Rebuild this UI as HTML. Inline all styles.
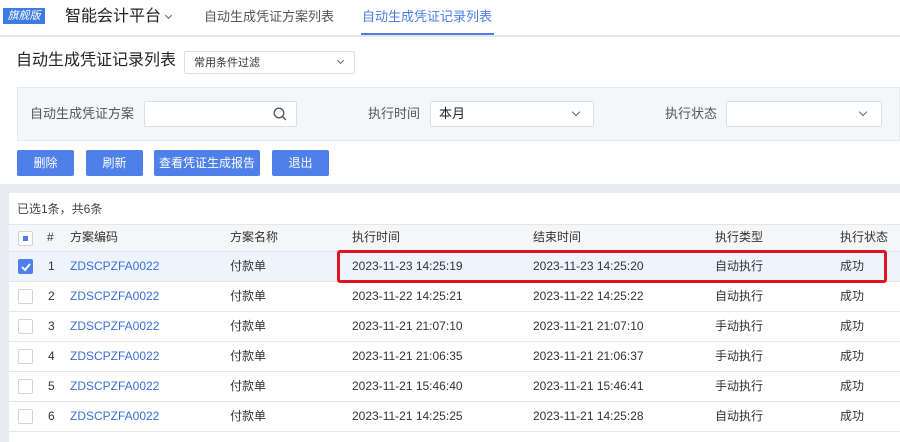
<!DOCTYPE html>
<html><head><meta charset="utf-8"><style>
*{margin:0;padding:0;box-sizing:border-box}
body{width:900px;height:442px;overflow:hidden;background:#e9edf2;font-family:"Liberation Sans","Noto Sans CJK SC",sans-serif;font-size:12px;color:#333;position:relative}
.a{position:absolute;white-space:nowrap}
.nav{position:absolute;left:0;top:0;width:900px;height:37px;background:#fff;border-bottom:2px solid #e4e6ea}
.top{position:absolute;left:0;top:37px;width:900px;height:147px;background:#fff}
.btn{position:absolute;top:150px;height:26px;background:#4f7fe9;color:#fff;font-size:12px;text-align:center;line-height:26px;border-radius:2px}
.sel{position:absolute;background:#fff;border:1px solid #dcdfe6;border-radius:2px}
.chev{position:absolute;width:7px;height:7px;border-right:1.3px solid #666;border-bottom:1.3px solid #666;transform:rotate(45deg)}
.tbl{position:absolute;left:9px;top:193px;width:891px;height:249px;background:#fff}
.row{position:absolute;left:9px;width:891px;height:30px;border-bottom:1px solid #e6e6e6;background:#fff}
.cb{position:absolute;left:9px;top:7px;width:15px;height:15px;border:1px solid #d0d3d8;border-radius:2px;background:#fff}
.row span{position:absolute;top:0;line-height:29px}
.link{color:#3a6fd8}
</style></head><body>
<div class="nav">
 <div class="a" style="left:3px;top:8px;width:42px;height:16px;background:#3c7be0;color:#fff;font-size:11px;font-style:italic;text-align:center;line-height:16px">旗舰版</div>
 <div class="a" style="left:65px;top:6px;font-size:16px;color:#222;line-height:22px">智能会计平台</div>
 <div class="chev" style="left:166px;top:13px;width:5px;height:5px"></div>
 <div class="a" style="left:204px;top:7px;font-size:13px;color:#555;line-height:20px">自动生成凭证方案列表</div>
 <div class="a" style="left:362px;top:7px;font-size:13px;color:#4a7ee6;line-height:20px">自动生成凭证记录列表</div>
 <div class="a" style="left:361px;top:33px;width:133px;height:2px;background:#4a7ee6"></div>
</div>
<div class="top"></div>
<div class="a" style="left:16px;top:50px;font-size:16px;color:#222;line-height:22px">自动生成凭证记录列表</div>
<div class="sel" style="left:184px;top:51px;width:171px;height:23px"><span class="a" style="left:9px;top:0;line-height:22px;font-size:11px">常用条件过滤</span><div class="chev" style="left:153px;top:6px;width:5px;height:5px"></div></div>
<div class="a" style="left:17px;top:87px;width:883px;height:54px;background:#f5f6f7;border:1px solid #e6e7ea"></div>
<div class="a" style="left:30px;top:101px;font-size:13px;color:#555;line-height:26px">自动生成凭证方案</div>
<div class="sel" style="left:144px;top:101px;width:153px;height:26px">
 <svg class="a" style="left:128px;top:5px" width="14" height="14" viewBox="0 0 14 14"><circle cx="6" cy="6" r="4.8" fill="none" stroke="#555" stroke-width="1.3"/><path d="M9.5 9.5L13 13" stroke="#555" stroke-width="1.3"/></svg></div>
<div class="a" style="left:368px;top:101px;font-size:13px;color:#555;line-height:26px">执行时间</div>
<div class="sel" style="left:430px;top:101px;width:164px;height:26px"><span class="a" style="left:8px;top:0;line-height:24px;font-size:13px;color:#222">本月</span><div class="chev" style="left:142px;top:7px;width:6px;height:6px"></div></div>
<div class="a" style="left:665px;top:101px;font-size:13px;color:#555;line-height:26px">执行状态</div>
<div class="sel" style="left:726px;top:101px;width:156px;height:26px"><div class="chev" style="left:133px;top:7px;width:6px;height:6px"></div></div>
<div class="btn" style="left:17px;width:57px">删除</div>
<div class="btn" style="left:86px;width:57px">刷新</div>
<div class="btn" style="left:154px;width:106px">查看凭证生成报告</div>
<div class="btn" style="left:272px;width:57px">退出</div>
<div class="tbl"></div>
<div class="a" style="left:17px;top:200px;color:#444;line-height:18px">已选1条，共6条</div>
<div class="row" style="top:224px;height:28px;background:#f5f6f7;border-top:1px solid #e6e6e6">
 <div class="cb" style="top:6px"><div class="a" style="left:4px;top:4px;width:5px;height:5px;background:#4a7ee6"></div></div>
 <span style="left:38px;line-height:24px">#</span><span style="left:61px;line-height:24px">方案编码</span><span style="left:221px;line-height:24px">方案名称</span><span style="left:343px;line-height:24px">执行时间</span><span style="left:524px;line-height:24px">结束时间</span><span style="left:706px;line-height:24px">执行类型</span><span style="left:831px;line-height:24px">执行状态</span>
</div>
<div class="row" style="top:252px;background:#eef4fd"><div class="cb" style="background:#4f7fe9;border-color:#4f7fe9"><svg class="a" style="left:2px;top:2px" width="10" height="10"><path d="M1 5l3 3 5-6" fill="none" stroke="#fff" stroke-width="1.8"/></svg></div><span style="left:39px">1</span><span class="link" style="left:61px">ZDSCPZFA0022</span><span style="left:221px">付款单</span><span style="left:343px">2023-11-23 14:25:19</span><span style="left:524px">2023-11-23 14:25:20</span><span style="left:706px">自动执行</span><span style="left:831px">成功</span></div>
<div class="row" style="top:282px"><div class="cb"></div><span style="left:39px">2</span><span class="link" style="left:61px">ZDSCPZFA0022</span><span style="left:221px">付款单</span><span style="left:343px">2023-11-22 14:25:21</span><span style="left:524px">2023-11-22 14:25:22</span><span style="left:706px">自动执行</span><span style="left:831px">成功</span></div>
<div class="row" style="top:312px"><div class="cb"></div><span style="left:39px">3</span><span class="link" style="left:61px">ZDSCPZFA0022</span><span style="left:221px">付款单</span><span style="left:343px">2023-11-21 21:07:10</span><span style="left:524px">2023-11-21 21:07:10</span><span style="left:706px">手动执行</span><span style="left:831px">成功</span></div>
<div class="row" style="top:342px"><div class="cb"></div><span style="left:39px">4</span><span class="link" style="left:61px">ZDSCPZFA0022</span><span style="left:221px">付款单</span><span style="left:343px">2023-11-21 21:06:35</span><span style="left:524px">2023-11-21 21:06:37</span><span style="left:706px">手动执行</span><span style="left:831px">成功</span></div>
<div class="row" style="top:372px"><div class="cb"></div><span style="left:39px">5</span><span class="link" style="left:61px">ZDSCPZFA0022</span><span style="left:221px">付款单</span><span style="left:343px">2023-11-21 15:46:40</span><span style="left:524px">2023-11-21 15:46:41</span><span style="left:706px">手动执行</span><span style="left:831px">成功</span></div>
<div class="row" style="top:402px"><div class="cb"></div><span style="left:39px">6</span><span class="link" style="left:61px">ZDSCPZFA0022</span><span style="left:221px">付款单</span><span style="left:343px">2023-11-21 14:25:25</span><span style="left:524px">2023-11-21 14:25:28</span><span style="left:706px">自动执行</span><span style="left:831px">成功</span></div>
<div class="a" style="left:337px;top:250px;width:550px;height:33px;border:3px solid #e0141c;border-radius:3px"></div>
</body></html>
